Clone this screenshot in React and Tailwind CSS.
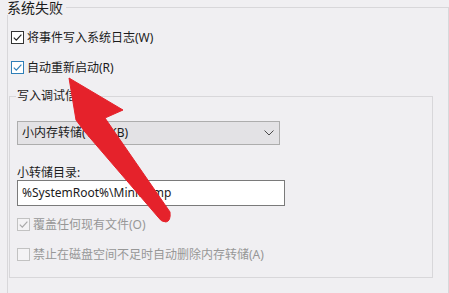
import React from "react";

const Check = ({ checked, tone = "normal" }) => {
  const box = {
    normal: "border-[#333333] bg-white",
    focus: "border-[#2f7fb8] bg-white",
    disabled: "border-[#c2c2c2] bg-[#f4f3f5]",
  }[tone];
  const stroke = { normal: "#222222", focus: "#2f7fb8", disabled: "#a8a8a8" }[tone];
  return (
    <span className={`flex h-[13px] w-[13px] shrink-0 items-center justify-center border ${box}`}>
      {checked && (
        <svg width="11" height="11" viewBox="0 0 11 11">
          <path d="M1.8 5.6 L4.3 8.1 L9.4 2.6" fill="none" stroke={stroke} strokeWidth="1.2" />
        </svg>
      )}
    </span>
  );
};

const Row = ({ label, checked, tone, className = "" }) => (
  <div className={`flex h-[13px] items-center gap-[3px] ${className}`}>
    <Check checked={checked} tone={tone} />
    <span
      className={`whitespace-nowrap text-[12px] leading-[13px] ${
        tone === "disabled" ? "text-[#979797]" : "text-[#1b1b1b]"
      }`}
    >
      {label}
    </span>
  </div>
);

export default function App() {
  return (
    <div
      className="relative h-[293px] w-[449px] overflow-hidden bg-[#f0eff2] text-[#1b1b1b]"
      style={{ fontFamily: '"Noto Sans", "Noto Sans CJK SC", sans-serif' }}
    >
      <div className="relative ml-[7px] mt-[7px] h-[300px] border-l border-r border-t border-[#d8d7da] pl-[3px] pt-[23px]">
        <span className="absolute -left-[8px] -top-[8px] bg-[#f0eff2] pl-[7px] pr-[3px] text-[14px] leading-[15px]">
          系统失败
        </span>

        <Row label="将事件写入系统日志(W)" checked tone="normal" />
        <Row label="自动重新启动(R)" checked tone="focus" className="mt-[17px]" />

        <div className="relative -ml-[2px] mr-[15px] mt-[22px] h-[182px] border border-[#d8d7da] pl-[7px] pt-[24px]">
          <span className="absolute -top-[7px] left-[6px] bg-[#f0eff2] px-[1px] text-[12px] leading-[12px]">
            写入调试信息
          </span>

          <div className="flex h-[24px] w-[263px] items-center justify-between border border-[#adadad] bg-[#e3e2e5] pl-[4px] pr-[5px]">
            <span className="text-[12px] leading-[12px]">小内存转储(128 KB)</span>
            <svg width="10" height="6" viewBox="0 0 10 6">
              <path d="M0.5 0.5 L5 5 L9.5 0.5" fill="none" stroke="#4a4a4a" strokeWidth="1" />
            </svg>
          </div>

          <div className="mt-[22px] text-[12px] leading-[12px]">小转储目录:</div>

          <div className="mt-[1px] flex h-[26px] w-[268px] items-center border border-[#7a7a7a] bg-white pl-[4px]">
            <span className="text-[12px] leading-[12px]">%SystemRoot%\Minidump</span>
          </div>

          <Row label="覆盖任何现有文件(O)" checked tone="disabled" className="mt-[12px]" />
          <Row label="禁止在磁盘空间不足时自动删除内存转储(A)" tone="disabled" className="mt-[17px]" />
        </div>
      </div>

      <svg className="absolute left-0 top-0" width="449" height="293" viewBox="0 0 449 293">
        <path
          d="M69 78 L123 110 L105 118 L170 212 Q171 221 166 222 Q161 222 158 217 L85 132 L76 120 Z"
          fill="#e5222b"
          stroke="#e5222b"
          strokeWidth="1"
          strokeLinejoin="round"
        />
      </svg>
    </div>
  );
}
